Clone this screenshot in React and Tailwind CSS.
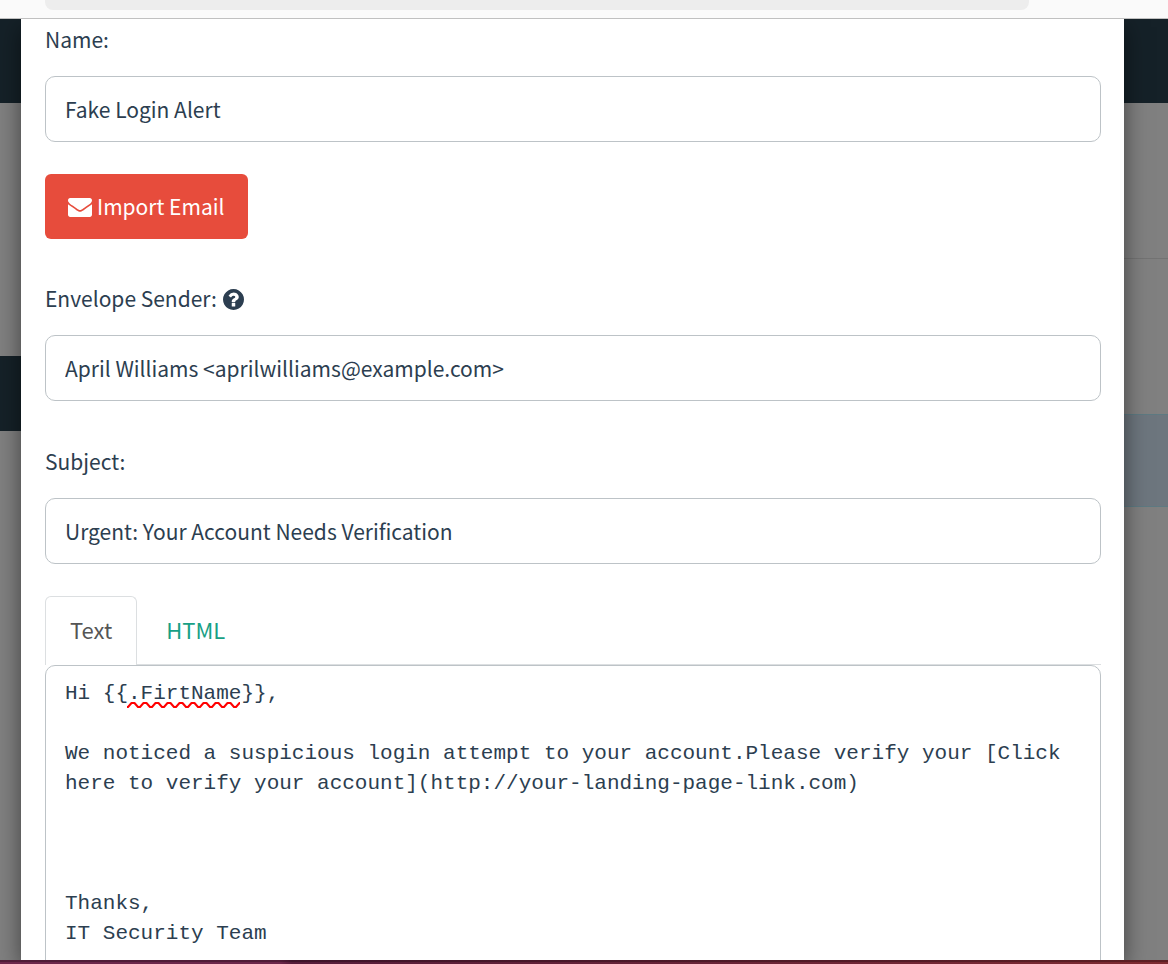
import { useState } from "react";

const MESSAGE = `Hi {{.FirtName}},

We noticed a suspicious login attempt to your account.Please verify your [Click here to verify your account](http://your-landing-page-link.com)



Thanks,
IT Security Team`;

function EnvelopeIcon() {
  return (
    <svg viewBox="0 256 1792 1408" className="mt-[2px] h-[19px] w-6" fill="currentColor" aria-hidden="true">
      <path d="M1792 710v794q0 66-47 113t-113 47h-1472q-66 0-113-47t-47-113v-794q44 49 101 87 362 246 497 345 57 42 92.5 65.5t94.5 48 110 24.5h2q51 0 110-24.5t94.5-48 92.5-65.5q170-123 498-345 57-39 100-87zm0-294q0 79-49 151t-122 123q-376 261-468 325-10 7-42.5 31t-54 38.8-52 32.5-57.5 27-50 9h-2q-23 0-50-9t-57.5-27-52-32.5-54-38.8-42.5-31q-91-64-262-182.5t-205-142.5q-62-42-117-115.5t-55-136.5q0-78 41.5-130t118.5-52h1472q65 0 112.5 47t47.5 113z" />
    </svg>
  );
}

function QuestionIcon() {
  return (
    <svg viewBox="128 128 1536 1536" className="size-[21px]" fill="currentColor" aria-hidden="true">
      <path d="M1024 1376v-192q0-14-9-23t-23-9h-192q-14 0-23 9t-9 23v192q0 14 9 23t23 9h192q14 0 23-9t9-23zm256-672q0-88-55.5-163t-138.5-116-170-41q-243 0-371 213-15 24 8 42l132 100q7 6 19 6 16 0 25-12 53-68 86-92 34-24 86-24 48 0 85.5 26t37.5 59q0 38-20 61t-68 45q-63 28-115.5 86.5t-52.5 125.5v36q0 14 9 23t23 9h192q14 0 23-9t9-23q0-19 21.5-49.5t54.5-49.5q32-18 49-28.5t46-35 44.5-48 28-60.5 12.5-81zm384 192q0 209-103 385.5t-279.5 279.5-385.5 103-385.5-103-279.5-279.5-103-385.5 103-385.5 279.5-279.5 385.5-103 385.5 103 279.5 279.5 103 385.5z" />
    </svg>
  );
}

function Squiggle() {
  return (
    <svg className="pointer-events-none absolute top-[37px] left-[82px] h-[6px] w-[113px]" aria-hidden="true">
      <defs>
        <pattern id="wave" width="12" height="6" patternUnits="userSpaceOnUse">
          <path d="M-1 5 L1 5 L4.5 1 L7.5 1 L11 5 L13 5" fill="none" stroke="#ff0000" strokeWidth="2" strokeLinejoin="round" />
        </pattern>
      </defs>
      <rect width="113" height="6" fill="url(#wave)" />
    </svg>
  );
}

function Field({ id, label, icon, value }) {
  return (
    <div className="flex flex-col gap-5">
      <div className="flex h-8 items-center gap-[6px]">
        <label htmlFor={id} className="self-start leading-[30px]">{label}</label>
        {icon}
      </div>
      <input
        id={id}
        type="text"
        defaultValue={value}
        className="h-[66px] w-full rounded-[10px] border border-[#bdc3c7] bg-white px-[19px] outline-none"
      />
    </div>
  );
}

function Tab({ selected, onSelect, children }) {
  return (
    <button
      type="button"
      role="tab"
      aria-selected={selected}
      onClick={onSelect}
      className={
        selected
          ? "-mb-px rounded-t-md border border-b-0 border-[#dcdfe1] bg-white px-6 pb-[3px] text-[#555555]"
          : "border border-transparent px-6 pb-[2px] text-[#18a085]"
      }
    >
      {children}
    </button>
  );
}

export default function App() {
  const [tab, setTab] = useState("text");

  return (
    <div className="flex h-screen flex-col overflow-hidden bg-[#808080] font-['Noto_Sans_CJK_SC',sans-serif] text-[21px] text-[#2c3e50]">
      <div className="h-[19px] shrink-0 border-b border-[#c0c0c0] bg-[#fafafa] pr-[139px] pl-[45px]">
        <div className="h-[10px] rounded-b-lg bg-[#ededed]" />
      </div>

      <div className="flex min-h-0 flex-1 overflow-hidden">
        <div className="flex w-[21px] shrink-0 flex-col">
          <div className="h-[84px] bg-[#152128]" />
          <div className="h-[253px]" />
          <div className="h-[75px] bg-[#152128]" />
        </div>

        <main className="z-10 min-w-0 flex-1 bg-white pt-[5px] pr-[23px] pl-6 shadow-[0_8px_22px_rgba(0,0,0,0.5)]">
          <Field id="name" label="Name:" value="Fake Login Alert" />
          <button type="button" className="mt-8 mb-11 flex h-[65px] items-center gap-[5px] rounded-md bg-[#e74c3c] px-[23px] text-white">
            <EnvelopeIcon />
            Import Email
          </button>
          <div className="flex flex-col gap-[45px]">
            <Field
              id="sender"
              label="Envelope Sender:"
              icon={<QuestionIcon />}
              value="April Williams <aprilwilliams@example.com>"
            />
            <Field id="subject" label="Subject:" value="Urgent: Your Account Needs Verification" />
          </div>

          <div role="tablist" className="mt-8 flex h-[69px] gap-1 border-b border-[#dcdfe1] text-[22px]">
            <Tab selected={tab === "text"} onSelect={() => setTab("text")}>Text</Tab>
            <Tab selected={tab === "html"} onSelect={() => setTab("html")}>HTML</Tab>
          </div>
          <div className="relative">
            <textarea
              aria-label="Message text"
              spellCheck={false}
              rows={12}
              defaultValue={MESSAGE}
              className="block w-full resize-none overflow-hidden rounded-[10px] border border-[#bdc3c7] bg-white px-[19px] py-[13px] font-['Liberation_Mono',monospace] text-[21px] leading-[30px] outline-none"
            />
            <Squiggle />
          </div>
        </main>

        <div className="flex w-11 shrink-0 flex-col">
          <div className="h-[84px] bg-[#152128]" />
          <div className="h-[156px] border-b border-[#737373]" />
          <div className="h-[155px]" />
          <div className="h-[93px] border-y border-[#5e7a82] bg-[#6d767e]" />
        </div>
      </div>

      <div className="h-1 shrink-0 bg-linear-to-r from-[#6b264a] from-24% via-[#551c3a] via-25% to-[#7d2a30]">
        <div className="h-[2px] bg-black/25" />
      </div>
    </div>
  );
}
